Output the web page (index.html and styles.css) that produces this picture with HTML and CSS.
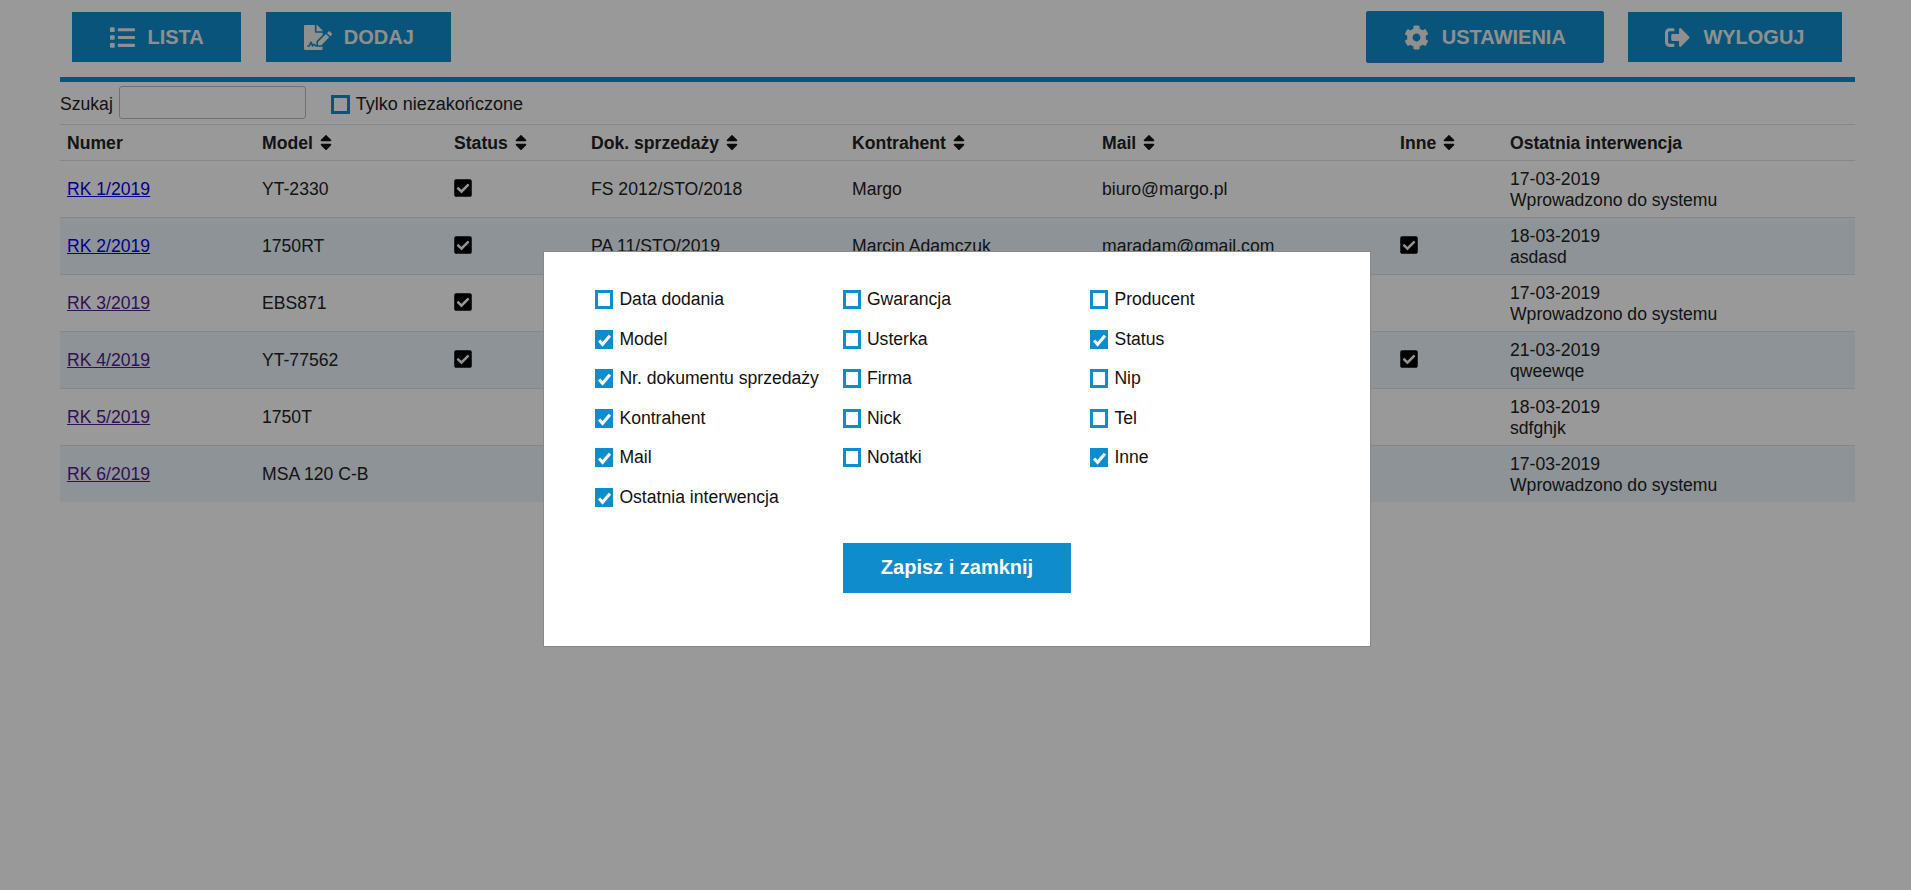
FILE: index.html
```html
<!DOCTYPE html>
<html lang="pl">
<head>
  <meta charset="UTF-8" />
  <title>Reklamacje</title>
  <link rel="stylesheet" href="styles.css">
</head>
<body>

  <svg class="defs" aria-hidden="true">
    <symbol id="i-list" viewBox="0 0 512 512"><path d="M80 368H16a16 16 0 0 0-16 16v64a16 16 0 0 0 16 16h64a16 16 0 0 0 16-16v-64a16 16 0 0 0-16-16zm0-320H16A16 16 0 0 0 0 64v64a16 16 0 0 0 16 16h64a16 16 0 0 0 16-16V64a16 16 0 0 0-16-16zm0 160H16a16 16 0 0 0-16 16v64a16 16 0 0 0 16 16h64a16 16 0 0 0 16-16v-64a16 16 0 0 0-16-16zm416 176H176a16 16 0 0 0-16 16v32a16 16 0 0 0 16 16h320a16 16 0 0 0 16-16v-32a16 16 0 0 0-16-16zm0-320H176a16 16 0 0 0-16 16v32a16 16 0 0 0 16 16h320a16 16 0 0 0 16-16V80a16 16 0 0 0-16-16zm0 160H176a16 16 0 0 0-16 16v32a16 16 0 0 0 16 16h320a16 16 0 0 0 16-16v-32a16 16 0 0 0-16-16z"/></symbol>
    <symbol id="i-file" viewBox="0 0 576 512"><path d="M218.17 424.14c-2.95-5.92-8.09-6.52-10.17-6.52s-7.22.59-10.02 6.19l-7.67 15.34c-6.37 12.78-25.03 11.37-29.48-2.09L144 386.59l-10.61 31.88c-5.89 17.66-22.38 29.53-41 29.53H80c-8.84 0-16-7.16-16-16s7.16-16 16-16h12.39c4.83 0 9.11-3.08 10.64-7.66l18.19-54.64c3.3-9.81 12.44-16.41 22.78-16.41s19.48 6.59 22.77 16.41l13.88 41.64c19.75-16.19 54.06-9.7 66 14.16 1.89 3.78 5.49 5.95 9.36 6.26v-82.12l128-127.09V160H248c-13.2 0-24-10.8-24-24V0H24C10.7 0 0 10.7 0 24v464c0 13.3 10.7 24 24 24h336c13.3 0 24-10.7 24-24v-40l-128-.11c-16.12-.31-30.58-9.28-37.83-23.75zM384 121.9c0-6.3-2.5-12.4-7-16.9L279.1 7c-4.5-4.5-10.6-7-17-7H256v128h128v-6.1zm-96 225.06V416h68.99l161.68-162.78-67.88-67.88L288 346.96zm280.54-179.63l-31.87-31.87c-9.94-9.94-26.07-9.94-36.01 0l-27.25 27.25 67.88 67.88 27.25-27.25c9.95-9.94 9.95-26.07 0-36.01z"/></symbol>
    <symbol id="i-cog" viewBox="0 0 512 512"><path d="M487.4 315.7l-42.6-24.6c4.3-23.2 4.3-47 0-70.2l42.6-24.6c4.9-2.8 7.1-8.6 5.5-14-11.1-35.6-30-67.8-54.7-94.6-3.8-4.1-10-5.1-14.8-2.3L380.8 110c-17.9-15.4-38.5-27.3-60.8-35.1V25.8c0-5.6-3.9-10.5-9.4-11.7-36.7-8.2-74.3-7.8-109.2 0-5.5 1.2-9.4 6.1-9.4 11.7V75c-22.2 7.9-42.8 19.8-60.8 35.1L88.7 85.5c-4.9-2.8-11-1.9-14.8 2.3-24.7 26.7-43.6 58.9-54.7 94.6-1.7 5.4.6 11.2 5.5 14L67.3 221c-4.3 23.2-4.3 47 0 70.2l-42.6 24.6c-4.9 2.8-7.1 8.6-5.5 14 11.1 35.6 30 67.8 54.7 94.6 3.8 4.1 10 5.1 14.8 2.3l42.6-24.6c17.9 15.4 38.5 27.3 60.8 35.1v49.2c0 5.6 3.9 10.5 9.4 11.7 36.7 8.2 74.3 7.8 109.2 0 5.5-1.2 9.4-6.1 9.4-11.7v-49.2c22.2-7.9 42.8-19.8 60.8-35.1l42.6 24.6c4.9 2.8 11 1.9 14.8-2.3 24.7-26.7 43.6-58.9 54.7-94.6 1.5-5.5-.7-11.3-5.6-14.1zM256 336c-44.1 0-80-35.9-80-80s35.9-80 80-80 80 35.9 80 80-35.9 80-80 80z"/></symbol>
    <symbol id="i-out" viewBox="0 0 512 512"><path d="M497 273L329 441c-15 15-41 4.500-41-17v-96H152c-13.300 0-24-10.700-24-24v-96c0-13.300 10.700-24 24-24h136V88c0-21.400 25.900-32 41-17l168 168c9.300 9.400 9.300 24.600 0 34zM192 436v-40c0-6.600-5.400-12-12-12H96c-17.700 0-32-14.300-32-32V160c0-17.700 14.300-32 32-32h84c6.600 0 12-5.400 12-12V76c0-6.600-5.400-12-12-12H96c-53 0-96 43-96 96v192c0 53 43 96 96 96h84c6.600 0 12-5.400 12-12z"/></symbol>
    <symbol id="i-sort" viewBox="0 0 320 512"><path d="M41 288h238c21.400 0 32.100 25.900 17 41L177 448c-9.400 9.400-24.600 9.400-33.900 0L24 329c-15.100-15.100-4.400-41 17-41zm255-105L177 64c-9.400-9.400-24.600-9.400-33.900 0L24 183c-15.100 15.100-4.400 41 17 41h238c21.400 0 32.100-25.900 17-41z"/></symbol>
    <symbol id="i-check" viewBox="0 0 448 512"><path d="M400 480H48c-26.510 0-48-21.490-48-48V80c0-26.510 21.490-48 48-48h352c26.510 0 48 21.490 48 48v352c0 26.510-21.490 48-48 48zm-204.686-98.059l184-184c6.248-6.248 6.248-16.379 0-22.627l-22.627-22.627c-6.248-6.248-16.379-6.249-22.628 0L184 302.745l-69.059-69.059c-6.248-6.248-16.379-6.248-22.628 0L69.686 256.313c-6.248 6.248-6.248 16.379 0 22.627l104 104c6.249 6.250 16.379 6.250 22.628.001z"/></symbol>
  </svg>

  <div class="page">

    <!-- TOP MENU -->
    <div class="topbar">
      <div class="menu">
        <a class="btn"><svg class="ico"><use href="#i-list"/></svg>Lista</a>
        <a class="btn"><svg class="ico ico-wide"><use href="#i-file"/></svg>Dodaj</a>
      </div>
      <div class="menu menu-right">
        <a class="btn btn-active"><svg class="ico"><use href="#i-cog"/></svg>Ustawienia</a>
        <a class="btn"><svg class="ico"><use href="#i-out"/></svg>Wyloguj</a>
      </div>
    </div>

    <!-- SEARCH -->
    <div class="search">
      <label class="search-label">Szukaj <input type="text" class="search-input"></label>
      <span class="only-open"><span class="box box-page"></span>Tylko niezakończone</span>
    </div>

    <!-- LIST -->
    <table class="list">
      <colgroup>
        <col class="c-num"><col class="c-model"><col class="c-status"><col class="c-doc">
        <col class="c-firm"><col class="c-mail"><col class="c-other"><col class="c-last">
      </colgroup>
      <thead>
        <tr>
          <th>Numer</th>
          <th>Model<svg class="sort"><use href="#i-sort"/></svg></th>
          <th>Status<svg class="sort"><use href="#i-sort"/></svg></th>
          <th>Dok. sprzedaży<svg class="sort"><use href="#i-sort"/></svg></th>
          <th>Kontrahent<svg class="sort"><use href="#i-sort"/></svg></th>
          <th>Mail<svg class="sort"><use href="#i-sort"/></svg></th>
          <th>Inne<svg class="sort"><use href="#i-sort"/></svg></th>
          <th>Ostatnia interwencja</th>
        </tr>
      </thead>
      <tbody>
        <tr>
          <td><a class="link">RK 1/2019</a></td>
          <td>YT-2330</td>
          <td><svg class="tick"><use href="#i-check"/></svg></td>
          <td>FS 2012/STO/2018</td>
          <td>Margo</td>
          <td>biuro@margo.pl</td>
          <td></td>
          <td>17-03-2019<br>Wprowadzono do systemu</td>
        </tr>
        <tr>
          <td><a class="link">RK 2/2019</a></td>
          <td>1750RT</td>
          <td><svg class="tick"><use href="#i-check"/></svg></td>
          <td>PA 11/STO/2019</td>
          <td>Marcin Adamczuk</td>
          <td>maradam@gmail.com</td>
          <td><svg class="tick"><use href="#i-check"/></svg></td>
          <td>18-03-2019<br>asdasd</td>
        </tr>
        <tr>
          <td><a class="link link-seen">RK 3/2019</a></td>
          <td>EBS871</td>
          <td><svg class="tick"><use href="#i-check"/></svg></td>
          <td></td>
          <td></td>
          <td></td>
          <td></td>
          <td>17-03-2019<br>Wprowadzono do systemu</td>
        </tr>
        <tr>
          <td><a class="link link-seen">RK 4/2019</a></td>
          <td>YT-77562</td>
          <td><svg class="tick"><use href="#i-check"/></svg></td>
          <td></td>
          <td></td>
          <td></td>
          <td><svg class="tick"><use href="#i-check"/></svg></td>
          <td>21-03-2019<br>qweewqe</td>
        </tr>
        <tr>
          <td><a class="link link-seen">RK 5/2019</a></td>
          <td>1750T</td>
          <td></td>
          <td></td>
          <td></td>
          <td></td>
          <td></td>
          <td>18-03-2019<br>sdfghjk</td>
        </tr>
        <tr>
          <td><a class="link link-seen">RK 6/2019</a></td>
          <td>MSA 120 C-B</td>
          <td></td>
          <td></td>
          <td></td>
          <td></td>
          <td></td>
          <td>17-03-2019<br>Wprowadzono do systemu</td>
        </tr>
      </tbody>
    </table>

  </div>

  <!-- COLUMN SETTINGS -->
  <div class="overlay">
    <div class="modal">
      <div class="fields">
        <label class="field"><span class="box"></span>Data dodania</label>
        <label class="field"><span class="box"></span>Gwarancja</label>
        <label class="field"><span class="box"></span>Producent</label>
        <label class="field"><span class="box on"><svg viewBox="0 0 12 12"><path d="M1 6.500l3.200 3.500 6.800-8"/></svg></span>Model</label>
        <label class="field"><span class="box"></span>Usterka</label>
        <label class="field"><span class="box on"><svg viewBox="0 0 12 12"><path d="M1 6.500l3.200 3.500 6.800-8"/></svg></span>Status</label>
        <label class="field"><span class="box on"><svg viewBox="0 0 12 12"><path d="M1 6.500l3.200 3.500 6.800-8"/></svg></span>Nr. dokumentu sprzedaży</label>
        <label class="field"><span class="box"></span>Firma</label>
        <label class="field"><span class="box"></span>Nip</label>
        <label class="field"><span class="box on"><svg viewBox="0 0 12 12"><path d="M1 6.500l3.200 3.500 6.800-8"/></svg></span>Kontrahent</label>
        <label class="field"><span class="box"></span>Nick</label>
        <label class="field"><span class="box"></span>Tel</label>
        <label class="field"><span class="box on"><svg viewBox="0 0 12 12"><path d="M1 6.500l3.200 3.500 6.800-8"/></svg></span>Mail</label>
        <label class="field"><span class="box"></span>Notatki</label>
        <label class="field"><span class="box on"><svg viewBox="0 0 12 12"><path d="M1 6.500l3.200 3.500 6.800-8"/></svg></span>Inne</label>
        <label class="field"><span class="box on"><svg viewBox="0 0 12 12"><path d="M1 6.500l3.200 3.500 6.800-8"/></svg></span>Ostatnia interwencja</label>
      </div>
      <div class="modal-foot">
        <button type="button" class="save">Zapisz i zamknij</button>
      </div>
    </div>
  </div>

</body>
</html>
```

FILE: styles.css
```css
body {
  margin: 0;
  font-family: "Liberation Sans", Arial, sans-serif;
  font-size: 17.6px;
  color: #222;
  background: #fff;
}

.defs { display: none; }

.page { margin: 0 56px 0 60px; }

.topbar {
  display: flex;
  justify-content: space-between;
  padding: 12px 13px 15px 12px;
  border-bottom: 5px solid #0e8ccb;
}

.menu { display: flex; gap: 25px; }
.menu-right { gap: 24px; }

.btn {
  display: flex;
  align-items: center;
  gap: 13px;
  height: 50px;
  padding: 0 37.5px;
  background: #0e8ccb;
  color: #eee;
  font-size: 20px;
  font-weight: bold;
  text-transform: uppercase;
}

.btn-active {
  margin: -1px 0;
  height: 52px;
  padding: 0 37px;
  border: 1px solid #2f7fd0;
  border-radius: 2px;
  box-sizing: border-box;
}

.ico { width: 25px; height: 25px; fill: #eee; }
.ico-wide { width: 28px; margin-right: -1px; }

.search {
  display: flex;
  align-items: center;
  height: 43px;
  box-sizing: border-box;
  padding-top: 2px;
  border-bottom: 1px solid #e2e2e2;
}

.search-label { display: flex; align-items: center; gap: 6px; }

.search-input {
  width: 187px;
  height: 33px;
  margin-bottom: 3px;
  padding: 0 4px;
  box-sizing: border-box;
  border: 1px solid #bbb;
  border-radius: 3px;
  background: #fff;
}

.only-open {
  display: flex;
  align-items: center;
  margin-left: 25px;
  font-size: 18px;
}

.box {
  display: block;
  flex: none;
  width: 18.4px;
  height: 19px;
  margin-right: 6px;
  box-sizing: border-box;
  border: 3px solid #0e8ccb;
}

.box-page { width: 19px; }

.box.on { background: #0e8ccb; }

.box svg {
  display: block;
  width: 13px;
  height: 14px;
  fill: none;
  stroke: #fff;
  stroke-width: 2.8;
}

.list {
  width: 100%;
  table-layout: fixed;
  border-collapse: collapse;
}

.c-num { width: 195px; }
.c-model { width: 192px; }
.c-status { width: 137px; }
.c-doc { width: 261px; }
.c-firm { width: 250px; }
.c-mail { width: 298px; }
.c-other { width: 110px; }

.list th {
  height: 33px;
  padding: 2px 7px 0;
  text-align: left;
  border-bottom: 1px solid #e2e2e2;
}

.list td {
  height: 42px;
  padding: 7px;
  line-height: 21px;
  border-bottom: 1px solid #e2e2e2;
}

.list td:last-child { padding: 8px 7px 6px; }

.list tbody tr:nth-child(even) { background: #ebf5fb; }
.list tbody tr:last-child td { border-bottom: 0; }

.sort {
  width: 12px;
  height: 19px;
  margin-left: 7px;
  vertical-align: -3px;
  fill: #111;
}

.tick {
  display: block;
  width: 18px;
  height: 20px;
  margin: -1px 0 1px;
  fill: #000;
}

.link { color: #0000ee; text-decoration: underline; }
.link-seen { color: #551a8b; }

.overlay {
  position: fixed;
  top: 0;
  left: 0;
  right: 0;
  bottom: 0;
  padding: 251px 0 0 543px;
  background: rgba(0, 0, 0, 0.4);
}

.modal {
  width: 828px;
  height: 396px;
  box-sizing: border-box;
  padding: 27.7px 51px 0;
  background: #fff;
  border: 1px solid #888;
  color: #111;
}

.fields {
  display: grid;
  grid-template-columns: repeat(3, 247.5px);
  grid-auto-rows: 39.6px;
}

.field { display: flex; align-items: center; }

.modal-foot {
  display: flex;
  justify-content: center;
  margin-top: 25.7px;
}

.save {
  width: 228px;
  height: 50px;
  padding: 0;
  border: none;
  background: #0e8ccb;
  color: #fff;
  font-family: inherit;
  font-size: 20px;
  font-weight: bold;
}
```
